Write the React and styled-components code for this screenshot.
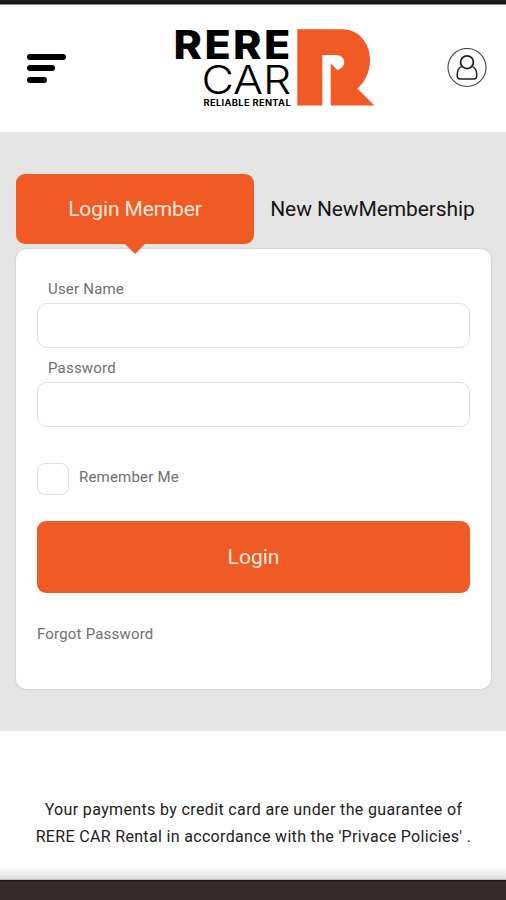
import React from "react";
import styled, { createGlobalStyle } from "styled-components";

const GlobalStyle = createGlobalStyle`
  * {
    box-sizing: border-box;
  }
  body {
    margin: 0;
    background-color: #fff;
    font-family: Roboto, "Liberation Sans", sans-serif;
  }
`;

//Full screen
const Container = styled.div`
  display: flex;
  flex-direction: column;
  width: 506px;
  height: 900px;
  overflow: hidden;
  background-color: #fefefe;
`;

const StatusBar = styled.div`
  height: 5px;
  background: linear-gradient(#1c1c1c 0 3px, #0d0d0d 3px 4px, #8f8f8f 4px);
`;

const Header = styled.header`
  display: flex;
  justify-content: space-between;
  align-items: flex-start;
  height: 127px;
  padding: 15px 19px 0 27px;
`;

const MenuButton = styled.button`
  display: flex;
  flex-direction: column;
  align-items: flex-start;
  gap: 5.5px;
  width: 39px;
  margin-top: 33.5px;
  padding: 0;
  border: none;
  background: none;
`;

const MenuLine = styled.span`
  width: ${(props) => props.$width}px;
  height: 6px;
  border-radius: 3px;
  background-color: #000;
`;

const Logo = styled.svg`
  width: 202px;
  height: 90px;
  margin-left: 36px;
  font-family: Inter, "Liberation Sans", sans-serif;
`;

const LogoText = styled.text`
  font-size: ${(props) => props.$size}px;
  font-weight: ${(props) => props.$weight};
  letter-spacing: ${(props) => props.$spacing}px;
`;

const UserButton = styled.button`
  height: 40px;
  margin-top: 28px;
  padding: 0;
  border: none;
  background: none;
`;

const Main = styled.main`
  height: 599px;
  padding: 42px 15px 0 16px;
  background-color: #e5e5e5;
`;

const Tabs = styled.div`
  display: flex;
  height: 70px;
`;

const Tab = styled.button`
  position: relative;
  width: ${(props) => (props.$active ? 238 : 237)}px;
  padding: 0;
  border: none;
  border-radius: 9px;
  background-color: ${(props) => (props.$active ? "#f05a24" : "transparent")};
  color: ${(props) => (props.$active ? "#ffe9dc" : "#161616")};
  font-family: inherit;
  font-size: 21px;
  letter-spacing: -0.1px;
  white-space: nowrap;
`;

//Little arrow that overlaps the card
const Arrow = styled.span`
  position: absolute;
  top: 70px;
  left: 109px;
  border: 10px solid transparent;
  border-top-color: #f05a24;
  border-bottom: none;
`;

const Card = styled.form`
  display: flex;
  flex-direction: column;
  height: 440px;
  margin-top: 5px;
  padding: 31px 21px 0;
  border-radius: 10px;
  background-color: #fefefe;
  box-shadow: 0 0 2px rgba(0, 0, 0, 0.22);
`;

const Label = styled.label`
  height: 18px;
  margin: 0 0 5px 11px;
  color: #707070;
  font-size: 15px;
  line-height: 19px;
  letter-spacing: 0.2px;
`;

const Input = styled.input`
  width: 433px;
  height: 45px;
  margin: 0 0 10.5px;
  padding: 0 12px;
  border: 1.5px solid #e0e0e0;
  border-radius: 10px;
  outline: none;
  background-color: #fff;
`;

const RememberRow = styled.label`
  display: flex;
  gap: 10px;
  margin-top: 26px;
  color: #707070;
  font-size: 15px;
  line-height: 28px;
  letter-spacing: 0.2px;
`;

const Checkbox = styled.input`
  appearance: none;
  width: 32px;
  height: 32px;
  margin: 0;
  border: 1.5px solid #e0e0e0;
  border-radius: 8px;
`;

const LoginButton = styled.button`
  width: 433px;
  height: 72px;
  margin-top: 26px;
  padding: 0;
  border: none;
  border-radius: 9px;
  background-color: #f05a24;
  color: #ffe9dc;
  font-family: inherit;
  font-size: 21px;
`;

const ForgotLink = styled.a`
  margin-top: 32px;
  color: #707070;
  font-size: 15px;
  line-height: 18px;
  letter-spacing: 0.2px;
`;

const Notice = styled.footer`
  flex: 1;
  padding-top: 65px;
  color: #222;
  text-align: center;
  background: linear-gradient(transparent 136px, #e4e4e4 147px, #b9b0b0);
`;

const NoticeLine = styled.p`
  margin: 0;
  padding-left: 1px;
  font-size: 16px;
  line-height: 27px;
  letter-spacing: ${(props) => props.$spacing}px;
  white-space: nowrap;
`;

const BottomBar = styled.div`
  height: 20px;
  background: linear-gradient(#211615 0 1px, #382a29 2px);
`;

function App() {
  return (
    <Container>
      <GlobalStyle />
      <StatusBar />
      <Header>
        <MenuButton type="button" aria-label="Menu">
          <MenuLine $width={39} />
          <MenuLine $width={28} />
          <MenuLine $width={20} />
        </MenuButton>
        <Logo viewBox="174 20 202 90">
          <LogoText
            x="173.6"
            y="58.6"
            $size={40}
            $weight={800}
            $spacing={2.2}
            textLength="119"
            lengthAdjust="spacingAndGlyphs"
          >
            RERE
          </LogoText>
          <LogoText
            x="201.4"
            y="94"
            $size={39.5}
            $weight={300}
            $spacing={0}
            textLength="90"
            lengthAdjust="spacingAndGlyphs"
          >
            CAR
          </LogoText>
          <LogoText
            x="203.5"
            y="105.5"
            $size={8.4}
            $weight={700}
            $spacing={0.3}
            textLength="87.5"
            lengthAdjust="spacingAndGlyphs"
          >
            RELIABLE RENTAL
          </LogoText>
          <path
            fill="#f05a24"
            d="M297.3 29.3H342C359 29.3 370 43 370 60C370 72 365 82 357.3 88.5L374.5 105.5H330.7V63.5L337.7 70.2C342 68 344.3 65.5 344.3 62.5C344.3 58 341 55 336 55H322.3V105.5H297.3Z"
          />
        </Logo>
        <UserButton type="button" aria-label="Account">
          <svg width="40" height="40" viewBox="0 0 40 40" fill="none">
            <circle cx="20" cy="19.5" r="19" stroke="#444" strokeWidth="1.1" />
            <circle cx="20" cy="14.2" r="6.4" stroke="#222" strokeWidth="1.8" />
            <path
              stroke="#222"
              strokeWidth="1.5"
              d="M14.6 18.6C11.4 19.6 10.2 22.5 10.2 27.5Q10.2 31 13.4 31H26.6Q29.8 31 29.8 27.5C29.8 22.5 28.6 19.6 25.4 18.6"
            />
          </svg>
        </UserButton>
      </Header>
      <Main>
        <Tabs>
          <Tab type="button" $active>
            Login Member
            <Arrow />
          </Tab>
          <Tab type="button">New NewMembership</Tab>
        </Tabs>
        <Card>
          <Label htmlFor="userName">User Name</Label>
          <Input id="userName" />
          <Label htmlFor="password">Password</Label>
          <Input id="password" type="password" />
          <RememberRow>
            <Checkbox type="checkbox" />
            Remember Me
          </RememberRow>
          <LoginButton type="button">Login</LoginButton>
          <ForgotLink>Forgot Password</ForgotLink>
        </Card>
      </Main>
      <Notice>
        <NoticeLine $spacing={0.36}>
          Your payments by credit card are under the guarantee of
        </NoticeLine>
        <NoticeLine $spacing={0.33}>
          RERE CAR Rental in accordance with the 'Privace Policies' .
        </NoticeLine>
      </Notice>
      <BottomBar />
    </Container>
  );
}

export default App;
